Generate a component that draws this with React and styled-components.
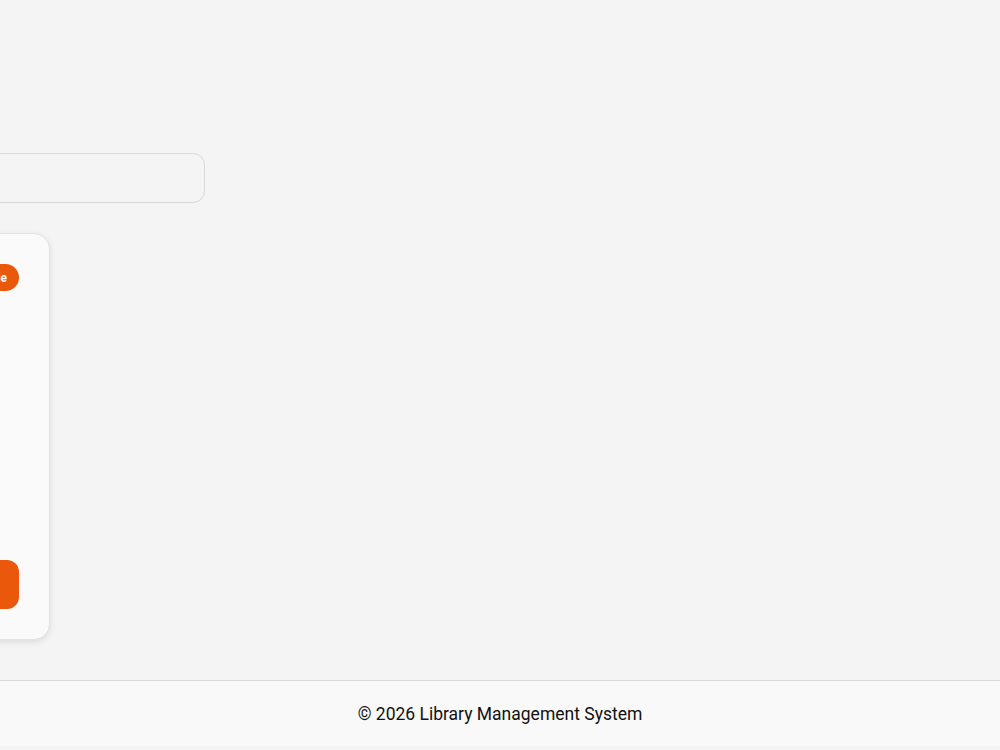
import React from "react";
import styled, { createGlobalStyle } from "styled-components";

const Global = createGlobalStyle`
  html, body { margin: 0; padding: 0; background: #f4f4f4; overflow: hidden; }
  body { font-family: Roboto, "Noto Sans", sans-serif; color: #111; }
`;

const Page = styled.div`
  height: 750px;
  display: flex;
  flex-direction: column;
  background: #f4f4f4;
`;

const Main = styled.main`
  flex: 1;
  display: flex;
  flex-direction: column;
  align-items: flex-end;
  width: 205px;
  padding-top: 153px;
  box-sizing: border-box;
`;

const SearchInput = styled.input`
  flex-shrink: 0;
  width: 760px;
  height: 50px;
  box-sizing: border-box;
  border: 1px solid #d8d8d8;
  border-radius: 12px;
  background: #f4f4f4;
  padding: 0 16px;
  font: 16px Roboto, sans-serif;
  outline: none;
`;

const CardRow = styled.div`
  display: flex;
  gap: 24px;
  margin-top: 30px;
  margin-right: 155px;
  flex-shrink: 0;
`;

const Card = styled.div`
  flex-shrink: 0;
  width: 320px;
  height: 407px;
  box-sizing: border-box;
  background: #fafafa;
  border: 1px solid #e2e2e2;
  border-radius: 16px;
  box-shadow: 0 2px 6px rgba(0, 0, 0, 0.1);
  padding: 30px 30px 30px 30px;
  display: flex;
  flex-direction: column;
`;

const CardHead = styled.div`
  display: flex;
  justify-content: space-between;
  align-items: center;
`;

const Title = styled.h3`
  margin: 0;
  font-size: 18px;
  font-weight: 600;
`;

const Badge = styled.span`
  height: 27px;
  display: inline-flex;
  align-items: center;
  padding: 0 12px;
  border-radius: 14px;
  background: #ea580c;
  color: #fff;
  font-size: 12px;
  font-weight: 700;
`;

const Info = styled.p`
  margin: 12px 0 0;
  font-size: 14px;
  color: #555;
`;

const BorrowButton = styled.button`
  margin-top: auto;
  height: 49px;
  border: none;
  border-radius: 12px;
  background: #ea580c;
  color: #fff;
  font: 600 16px Roboto, sans-serif;
`;

const Footer = styled.footer`
  height: 66px;
  margin-bottom: 4px;
  box-sizing: border-box;
  border-top: 1px solid #d9d9d9;
  background: #f9f9f9;
  display: flex;
  align-items: center;
  justify-content: center;
  font-size: 17.5px;
  color: #111;
`;

export default function App() {
  return (
    <Page>
      <Global />
      <Main>
        <SearchInput placeholder="" aria-label="Search books" />
        <CardRow>
          <Card>
            <CardHead>
              <Title>Book</Title>
              <Badge>Available</Badge>
            </CardHead>
            <Info>Author</Info>
            <BorrowButton>Borrow</BorrowButton>
          </Card>
        </CardRow>
      </Main>
      <Footer>© 2026 Library Management System</Footer>
    </Page>
  );
}
